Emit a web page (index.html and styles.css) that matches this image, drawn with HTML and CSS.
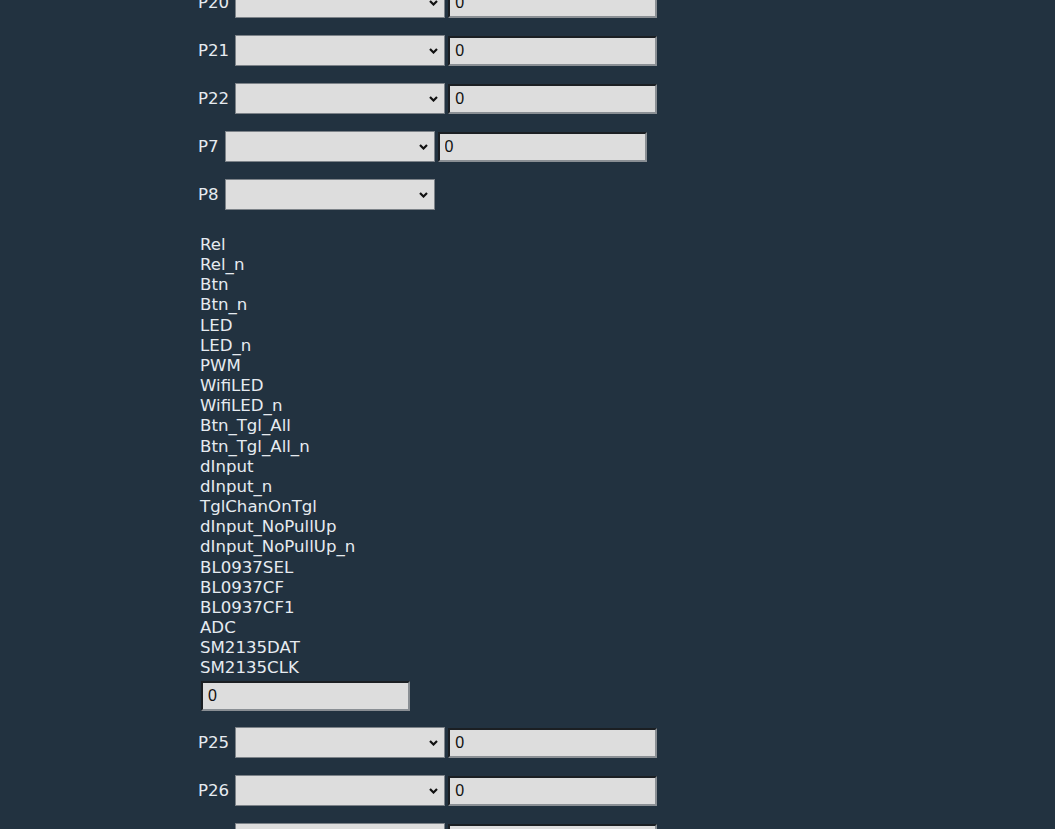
FILE: index.html
```html
<!DOCTYPE html>
<html>
<head>
<meta charset="utf-8">
<link rel="stylesheet" href="styles.css">
</head>
<body>
<div class="page">
  <div class="row first"><label>P20</label><select class="sel"></select><input class="val" type="text" value="0"></div>
  <div class="row"><label>P21</label><select class="sel"></select><input class="val" type="text" value="0"></div>
  <div class="row"><label>P22</label><select class="sel"></select><input class="val" type="text" value="0"></div>
  <div class="row"><label>P7</label><select class="sel"></select><input class="val" type="text" value="0"></div>
  <div class="row"><label>P8</label><select class="sel"></select></div>
  <div class="types">
    <div>Rel</div>
    <div>Rel_n</div>
    <div>Btn</div>
    <div>Btn_n</div>
    <div>LED</div>
    <div>LED_n</div>
    <div>PWM</div>
    <div>WifiLED</div>
    <div>WifiLED_n</div>
    <div>Btn_Tgl_All</div>
    <div>Btn_Tgl_All_n</div>
    <div>dInput</div>
    <div>dInput_n</div>
    <div>TglChanOnTgl</div>
    <div>dInput_NoPullUp</div>
    <div>dInput_NoPullUp_n</div>
    <div>BL0937SEL</div>
    <div>BL0937CF</div>
    <div>BL0937CF1</div>
    <div>ADC</div>
    <div>SM2135DAT</div>
    <div>SM2135CLK</div>
  </div>
  <input class="val solo" type="text" value="0">
  <div class="row"><label>P25</label><select class="sel"></select><input class="val" type="text" value="0"></div>
  <div class="row"><label>P26</label><select class="sel"></select><input class="val" type="text" value="0"></div>
  <div class="row"><label>P27</label><select class="sel"></select><input class="val" type="text" value="0"></div>
</div>
</body>
</html>
```

FILE: styles.css
```css
html, body {
  margin: 0;
  background: #223240;
  overflow: hidden;
}
body {
  color: #e6ebf0;
  font-family: "DejaVu Sans", Verdana, sans-serif;
  font-size: 16.6px;
}
.page {
  padding-left: 198px;
}
.row {
  display: flex;
  align-items: center;
  height: 31px;
  margin-bottom: 17px;
}
.row.first {
  margin-top: -13px;
}
.row label {
  margin-right: 6px;
  line-height: 20px;
}
.sel {
  -webkit-appearance: none;
  appearance: none;
  box-sizing: border-box;
  width: 210px;
  height: 31px;
  margin: 0 3px 0 0;
  padding: 0;
  border: 1px solid #7c8288;
  background-color: #dddddd;
  background-image: url("data:image/svg+xml,%3Csvg xmlns='http://www.w3.org/2000/svg' width='9' height='6' viewBox='0 0 9 6'%3E%3Cpath d='M1 1 L4.5 4.5 L8 1' fill='none' stroke='%23111' stroke-width='2.2'/%3E%3C/svg%3E");
  background-repeat: no-repeat;
  background-position: right 6px center;
  border-radius: 0;
}
.val {
  box-sizing: border-box;
  width: 209px;
  height: 30px;
  margin: 0;
  padding: 0 0 0 5px;
  border-style: solid;
  border-width: 2px;
  border-color: #1b1f23 #8a8f94 #8a8f94 #1b1f23;
  background: #dddddd;
  color: #111;
  font-family: "Liberation Sans", Arial, sans-serif;
  font-size: 16px;
  border-radius: 0;
  outline: none;
}
.types {
  margin: 25px 0 0 2px;
  line-height: 20.15px;
}
.solo {
  display: block;
  margin: 3px 0 16px 3px;
}
```
